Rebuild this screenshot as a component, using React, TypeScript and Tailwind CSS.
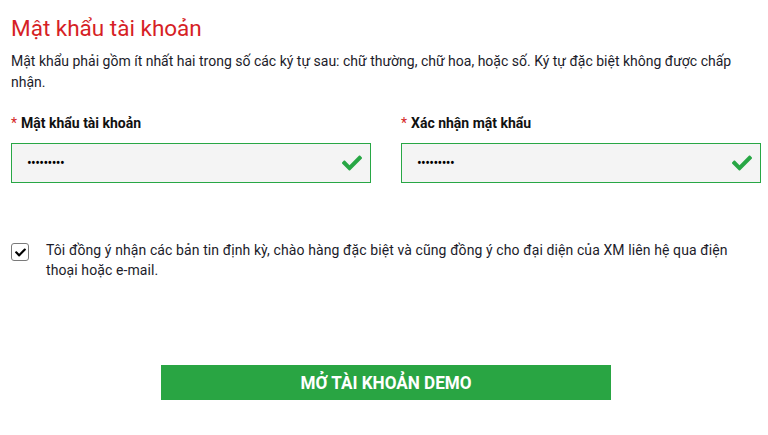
import React from "react";
import { FaCheck } from "react-icons/fa";

function Field({ label }: { label: string }) {
  return (
    <div className="flex flex-col">
      <label className="text-[14px] leading-[20px] font-bold text-[#111]">
        <span className="text-[#d51f26] font-normal mr-[4px]">*</span>
        {label}
      </label>
      <div className="mt-[10px] h-[40px] w-[360px] border border-[#28a745] bg-[#f4f4f4] flex items-center justify-between pl-[15px] pr-[8px]">
        <span className="text-[14px] tracking-[-0.6px] text-black">•••••••••</span>
        <FaCheck className="text-[#28a745]" size={20} />
      </div>
    </div>
  );
}

export default function App() {
  return (
    <div
      className="w-[768px] h-[435px] bg-white pl-[11px] pt-[13px] overflow-hidden"
      style={{ fontFamily: "Roboto, 'Noto Sans', sans-serif" }}
    >
      <h1 className="text-[22.5px] leading-[30px] text-[#d61f26] font-normal">Mật khẩu tài khoản</h1>
      <p className="mt-[8px] w-[750px] text-[14px] leading-[21px] text-[#1c1c2a]">
        Mật khẩu phải gồm ít nhất hai trong số các ký tự sau: chữ thường, chữ hoa, hoặc số. Ký tự đặc biệt không được chấp nhận.
      </p>
      <div className="mt-[20px] grid grid-cols-[360px_360px] gap-x-[30px]">
        <Field label="Mật khẩu tài khoản" />
        <Field label="Xác nhận mật khẩu" />
      </div>
      <div className="mt-[57px] flex w-[750px]">
        <div className="mt-[3px] w-[18px] h-[18px] shrink-0 rounded-[3px] border border-[#7a7a7a] bg-white flex items-center justify-center">
          <FaCheck className="text-black" size={11} />
        </div>
        <p className="ml-[17px] w-[700px] text-[14px] leading-[20px] tracking-[0.1px] text-[#1c1c2a]">
          Tôi đồng ý nhận các bản tin định kỳ, chào hàng đặc biệt và cũng đồng ý cho đại diện của XM liên hệ qua điện thoại hoặc e-mail.
        </p>
      </div>
      <button className="mt-[85px] ml-[150px] w-[450px] h-[35px] bg-[#29a543] text-white font-bold text-[18px] flex items-center justify-center">
        <span className="inline-block scale-x-[0.95]">MỞ TÀI KHOẢN DEMO</span>
      </button>
    </div>
  );
}
